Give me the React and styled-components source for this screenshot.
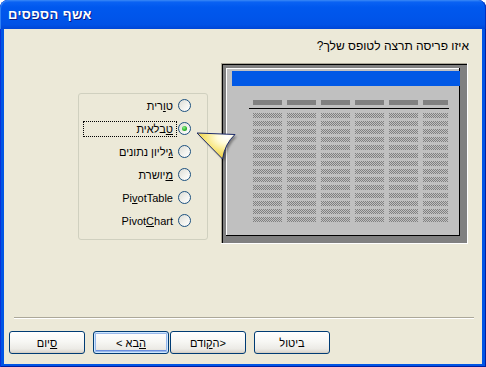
import styled, { createGlobalStyle } from "styled-components";

const GlobalStyle = createGlobalStyle`
  html, body {
    margin: 0;
    padding: 0;
    background: #fff;
  }
  #root {
    width: 486px;
    height: 367px;
  }
`;

const options = [
    { pre: "ט", key: "ו", post: "רית" },
    { pre: "", key: "ט", post: "בלאית", checked: true },
    { pre: "", key: "ג", post: "יליון נתונים" },
    { pre: "", key: "מ", post: "יושרת" },
    { pre: "Pi", key: "v", post: "otTable" },
    { pre: "Pivot", key: "C", post: "hart" },
];

const columns = [
    { x: 32, w: 29 },
    { x: 66, w: 29 },
    { x: 100, w: 29 },
    { x: 134, w: 29 },
    { x: 168, w: 29 },
    { x: 202, w: 25 },
];

const rows = Array.from({ length: 14 }, (_, i) => 50 + i * 8);

function LayoutPreview() {
    return (
        <svg width="248" height="182" viewBox="0 0 248 182">
            <defs>
                <pattern id="dither" width="2" height="2" patternUnits="userSpaceOnUse">
                    <rect width="2" height="2" fill="#c0c0c0" />
                    <rect width="1" height="1" fill="#808080" />
                    <rect x="1" y="1" width="1" height="1" fill="#808080" />
                </pattern>
            </defs>
            <rect width="247" height="181" fill="#fff" />
            <rect width="246" height="180" fill="#aca899" />
            <rect x="1" y="1" width="245" height="179" fill="#000" />
            <rect x="2" y="2" width="244" height="178" fill="#808080" />
            <rect x="5" y="5" width="234" height="168" fill="#000" />
            <rect x="5" y="5" width="233" height="167" fill="#fff" />
            <rect x="6" y="6" width="232" height="166" fill="#c0c0c0" />
            <rect x="11" y="8" width="228" height="15" fill="#0058e6" />
            {columns.map(c => (
                <rect key={c.x} x={c.x} y="37" width={c.w} height="5" fill="#808080" />
            ))}
            <rect x="28" y="45" width="200" height="1" fill="#000" />
            {rows.map(y =>
                columns.map(c => (
                    <rect key={`${y}-${c.x}`} x={c.x} y={y} width={c.w} height="5" fill="url(#dither)" />
                ))
            )}
        </svg>
    );
}

function Pointer() {
    return (
        <PointerSvg width="46" height="38" viewBox="0 0 46 38">
            <defs>
                <radialGradient id="tailFill" cx="0.78" cy="0.15" r="0.85">
                    <stop offset="0" stopColor="#ffffff" />
                    <stop offset="0.3" stopColor="#fffbd8" />
                    <stop offset="0.65" stopColor="#f8e67e" />
                    <stop offset="1" stopColor="#eccb3c" />
                </radialGradient>
                <filter id="tailShadow" x="-20%" y="-20%" width="150%" height="150%">
                    <feGaussianBlur stdDeviation="1.2" />
                </filter>
            </defs>
            <path d="M5 8 L43 9.5 Q33 18.5 30.5 34 Z" fill="rgba(0,0,0,0.35)" filter="url(#tailShadow)" />
            <path d="M3 6 L41 7.5 Q31 16.5 28.5 32 Z" fill="url(#tailFill)" stroke="#1c2a6a" strokeWidth="1" />
        </PointerSvg>
    );
}

export default function App() {
    return (
        <>
            <GlobalStyle />
            <Window>
                <TitleBar>אשף הספסים</TitleBar>
                <Client>
                    <Question>איזו פריסה תרצה לטופס שלך?</Question>
                    <MainRow>
                        <Preview>
                            <LayoutPreview />
                        </Preview>
                        <GroupBox>
                            {options.map((o, i) => (
                                <RadioRow key={i}>
                                    <RadioCircle $checked={o.checked} />
                                    <RadioLabel $focused={o.checked}>
                                        {o.pre}<Key>{o.key}</Key>{o.post}
                                    </RadioLabel>
                                </RadioRow>
                            ))}
                        </GroupBox>
                        <Pointer />
                    </MainRow>
                    <Separator />
                    <ButtonBar>
                        <Button $gap={8}>ביטול</Button>
                        <Button $gap={1}>{"<"}ה<Key>ק</Key>ודם</Button>
                        <Button $gap={8} $default><Key>ה</Key>בא {">"}</Button>
                        <Button><Key>ס</Key>יום</Button>
                    </ButtonBar>
                </Client>
            </Window>
        </>
    );
}

const Window = styled.div`
    width: 486px;
    height: 367px;
    box-sizing: border-box;
    display: flex;
    flex-direction: column;
    padding: 0 4px 3px 4px;
    background: #0055e5;
    border-radius: 8px 8px 0 0;
    box-shadow: inset 1px 0 #0831d9, inset -1px 0 #001ea0, inset 0 -1px #001ea0;
    font-family: "Liberation Sans", "DejaVu Sans", sans-serif;
    font-size: 11px;
    color: #000;
    overflow: hidden;
`;

const TitleBar = styled.div`
    height: 29px;
    flex: none;
    margin: 0 -4px;
    padding-left: 8px;
    display: flex;
    align-items: center;
    border-radius: 8px 8px 0 0;
    background: linear-gradient(180deg, #3c8cf7 0%, #0a62f3 7%, #0058ee 25%, #0055ea 60%, #0052e6 85%, #0046d6 100%);
    box-shadow: inset 1px 1px #2f80f5, inset -1px 0 #0030c0;
    color: #fff;
    font-weight: bold;
    font-size: 13px;
    letter-spacing: 0.4px;
    text-shadow: 1px 1px #0a1883;
`;

const Client = styled.div`
    flex: 1;
    display: flex;
    flex-direction: column;
    direction: rtl;
    background: #ece9d8;
`;

const Question = styled.div`
    padding: 10px 13px 0 0;
    font-size: 12px;
    line-height: 14px;
`;

const MainRow = styled.div`
    position: relative;
    display: flex;
    align-items: flex-start;
    gap: 13px;
    margin-top: 10px;
    padding-right: 13px;
`;

const Preview = styled.div`
    width: 248px;
    height: 182px;
    svg {
        display: block;
    }
`;

const GroupBox = styled.div`
    width: 130px;
    box-sizing: border-box;
    margin-top: 30px;
    padding: 0 16px 7px 4px;
    border: 1px solid #d0d0bf;
    border-radius: 3px;
`;

const RadioRow = styled.div`
    height: 23px;
    display: flex;
    align-items: center;
`;

const RadioCircle = styled.span`
    position: relative;
    flex: none;
    width: 13px;
    height: 13px;
    box-sizing: border-box;
    border: 1px solid #1c5180;
    border-radius: 50%;
    background: linear-gradient(135deg, #dcdcd5 0%, #f2f2ee 55%, #fff 100%);
    &::after {
        content: "";
        display: ${p => (p.$checked ? "block" : "none")};
        position: absolute;
        left: 3px;
        top: 3px;
        width: 5px;
        height: 5px;
        border-radius: 50%;
        background: radial-gradient(circle at 40% 35%, #8ef08e 0%, #2fb52f 55%, #168a16 100%);
    }
`;

const RadioLabel = styled.span`
    flex: 1;
    height: 16px;
    line-height: 14px;
    box-sizing: border-box;
    margin-right: 1px;
    padding: 0 3px;
    border: 1px dotted ${p => (p.$focused ? "#000" : "transparent")};
    white-space: nowrap;
`;

const Key = styled.span`
    text-decoration: underline;
`;

const PointerSvg = styled.svg`
    position: absolute;
    left: 190px;
    top: 64px;
    z-index: 2;
`;

const Separator = styled.div`
    margin: auto 8px 0 10px;
    height: 0;
    border-top: 1px solid #aca899;
    border-bottom: 1px solid #fff;
`;

const ButtonBar = styled.div`
    display: flex;
    justify-content: flex-end;
    padding: 12px 0 10px 5px;
`;

const Button = styled.button`
    width: 76px;
    height: 23px;
    margin-left: ${p => p.$gap || 0}px;
    padding: 0;
    direction: rtl;
    border: 1px solid #003c74;
    border-radius: 3px;
    background: linear-gradient(180deg, #ffffff 0%, #f7f7f4 45%, #ecebe6 80%, #d8d4cb 100%);
    box-shadow: ${p => (p.$default
        ? "inset 0 0 0 1px #cee7ff, inset 0 0 0 2px #98b8ea, inset 0 -2px 0 1px #6a8fe0"
        : "inset 0 -1px #d6d0c5")};
    font-family: inherit;
    font-size: 11px;
    color: #000;
`;
